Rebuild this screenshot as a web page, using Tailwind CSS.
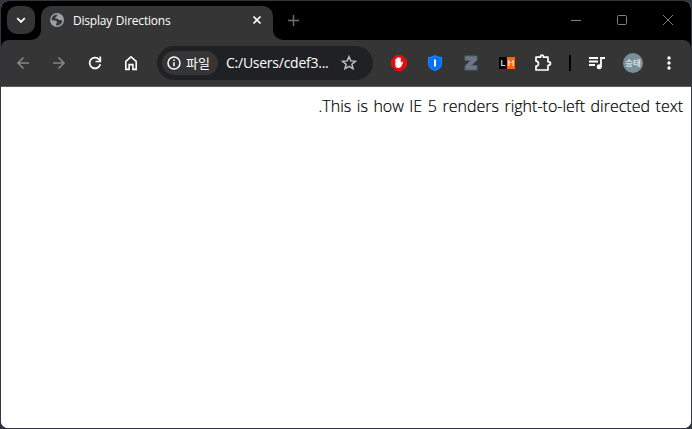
<!DOCTYPE html>
<html lang="ko">
<head>
<meta charset="utf-8">
<title>Display Directions</title>
<script src="https://cdn.jsdelivr.net/npm/@tailwindcss/browser@4"></script>
</head>
<body class="w-[692px] h-[429px] overflow-hidden bg-[#30353f] p-px font-['Open_Sans','Noto_Sans_CJK_KR',sans-serif]">
<div class="flex h-[427px] w-[690px] flex-col overflow-hidden rounded-[7px] bg-white">
  <!-- Tab strip -->
  <header class="flex h-[39px] shrink-0 bg-black">
    <button class="mt-[5px] ml-[6px] flex size-7 items-center justify-center rounded-[10px] bg-[#353535]">
      <svg width="10" height="7" viewBox="0 0 10 7" fill="none" stroke="#fff" stroke-width="1.800"><path d="M1.200 1.200L5 5l3.800-3.800"/></svg>
    </button>
    <svg class="mt-[29px] ml-[-4px] shrink-0" width="10" height="10"><path d="M10 0v10H0A10 10 0 0 0 10 0" fill="#353535"/></svg>
    <div class="mt-[5px] flex h-[34px] w-[232px] shrink-0 items-center rounded-t-[10px] bg-[#353535] pb-[6px] pl-[9px]">
      <svg width="14" height="14" viewBox="0 0 14 14"><circle cx="7" cy="7" r="7" fill="#9aa0a6"/><path d="M7.300 1.500C8 2.400 6.300 2.700 6.400 3.600c.1.9-1.400.7-1.500 1.500-.1.700 2.600.3 3.200 1.100.5.8 1.300 1 2.200.9.7-.1 1.100.5 2.100.3A5.500 5.500 0 0 1 6.200 12.400V10.700c0-.5.9-.7.8-1.500-.1-.8-.9-1.500-1.800-1.600L1.500 7.300A5.500 5.500 0 0 1 7.300 1.500" fill="#353535"/><path d="M8 2.200c1 .1 1.600.7 1.200 1.300-.3.600-1.300.6-1.200 1.300.1.700 1.200.7 1.700 1.200.5.5 1.600.3 2.900.3L11 3 8.500 1z" fill="#9aa0a6"/></svg>
      <span class="ml-[9px] mt-[2px] w-[170px] text-[12px] leading-[18px] tracking-[-0.22px] [word-spacing:1px] whitespace-nowrap text-white">Display Directions</span>
      <svg class="ml-[9px]" width="10" height="10" viewBox="0 0 10 10" stroke="#fff" stroke-width="1.700"><path d="M1.500 1.500l7 7m0-7l-7 7"/></svg>
    </div>
    <svg class="mt-[29px] shrink-0" width="10" height="10"><path d="M0 0v10h10A10 10 0 0 1 0 0" fill="#353535"/></svg>
    <svg class="mt-[14px] ml-[5px] shrink-0" width="11" height="11" viewBox="0 0 11 11" stroke="#707070" stroke-width="1.400"><path d="M5.500 0v11M0 5.500h11"/></svg>
    <div class="ml-auto flex h-[38px] items-center">
      <div class="flex w-[46px] justify-center"><svg width="10" height="10" stroke="#808080"><path d="M0 5.500h10"/></svg></div>
      <div class="flex w-[46px] justify-center"><svg width="10" height="10" fill="none" stroke="#808080"><rect x=".5" y=".5" width="9" height="9" rx="1"/></svg></div>
      <div class="flex w-[46px] justify-center"><svg width="10" height="10" stroke="#808080"><path d="M0 0l10 10M10 0L0 10"/></svg></div>
    </div>
  </header>
  <!-- Toolbar -->
  <div class="shrink-0 bg-black">
  <nav class="flex h-[47px] items-center rounded-t-[8px] border-b border-[#5c5c5c] bg-[#353535] pl-1 text-white">
    <div class="flex w-9 justify-center"><svg width="14" height="14" viewBox="0 0 14 14" fill="none" stroke="#858585" stroke-width="1.600"><path d="M13 7H2m5.500-5.500L2 7l5.500 5.500"/></svg></div>
    <div class="flex w-9 justify-center"><svg width="14" height="14" viewBox="0 0 14 14" fill="none" stroke="#858585" stroke-width="1.600"><path d="M1 7h11M6.500 1.500L12 7l-5.500 5.500"/></svg></div>
    <div class="flex w-9 justify-center"><svg width="14" height="14" viewBox="0 0 14 14" fill="none" stroke="#fff" stroke-width="1.700"><path d="M12.300 8.300A5.400 5.400 0 1 1 11 3.300l1.200 1.500"/><path d="M12.300 .5v5H7.500"/></svg></div>
    <div class="flex w-9 justify-center"><svg width="14" height="16" viewBox="0 0 14 16" fill="none" stroke="#fff" stroke-width="1.600"><path d="M1.800 6.300L7 1.900l5.200 4.400v8.100H8.900V9.600H5.100v4.800H1.800z"/></svg></div>
    <div class="mx-2 flex h-[34px] w-[216px] items-center rounded-full bg-[#202124] pl-[5px]">
      <div class="flex h-6 w-14 items-center rounded-full bg-[#353535] pl-[5px]">
        <svg width="14" height="14" viewBox="0 0 14 14" fill="none" stroke="#fff" stroke-width="1.500"><circle cx="7" cy="7" r="6"/><path d="M7 6.200v4M7 3.500v1.500"/></svg>
        <span class="mb-px ml-[5px] font-['Noto_Sans_CJK_KR',sans-serif] text-[13px] leading-[20px]">파일</span>
      </div>
      <span class="ml-2 w-[104px] text-[14px] leading-5 tracking-[-0.250px] whitespace-nowrap">C:/Users/cdef3...</span>
      <svg class="ml-[11px]" width="16" height="16" viewBox="0 0 16 16" fill="none" stroke="#c0c0c0" stroke-width="1.500"><path d="M8 1.700l1.800 4.200 4.600.4-3.500 3 1.100 4.500L8 11.400l-4 2.400 1.100-4.500-3.500-3 4.600-.4z"/></svg>
    </div>
    <div class="flex w-9 justify-center"><svg width="16" height="16" viewBox="0 0 16 16"><path d="M5 0h6l5 5v6l-5 5H5l-5-5V5z" fill="#e90b0b"/><path d="M4.300 7.800V4.300q.6-.9 1.300 0V3q.6-.9 1.400 0v-.5q.7-.9 1.400 0V3q.7-.8 1.400 0v5.300l1-1.500q.8-.7 1.400.1l-1.700 4.200Q9.500 13 7.500 13q-3.200 0-3.200-3.300z" fill="#fff"/></svg></div>
    <div class="flex w-9 justify-center"><svg width="14" height="16" viewBox="0 0 14 16"><path d="M7 0q3 2 7 2v7q0 4.500-7 7-7-2.500-7-7V2q4 0 7-2" fill="#1687ff"/><path d="M7 1.500q2.500 1.500 6 1.700V9q0 3.500-6 6-6-2.500-6-6V3.200q3.500-.2 6-1.700" fill="#086ffa"/><path d="M6 4.500h2v7H6z" fill="#fff"/></svg></div>
    <div class="flex w-9 justify-center"><svg width="14" height="16" viewBox="0 0 14 16"><path d="M1 1h12v4L7.500 10.500H13V15H1v-4l5.500-5.500H1z" fill="#6b7885" stroke="#56616d"/></svg></div>
    <div class="flex w-9 justify-center"><div class="flex h-3 w-4 text-center font-['Liberation_Sans',sans-serif] text-[9px] leading-3"><span class="w-2 bg-black">L</span><span class="w-2 bg-[#ff6600]">H</span></div></div>
    <div class="flex w-9 justify-center"><svg width="18" height="18" viewBox="0 0 18 18" fill="none" stroke="#fff" stroke-width="1.700" stroke-linejoin="round"><path d="M2 3.200h4.500q0-2 1.500-2t1.500 2H14v4.500q2.500 0 2.500 1.800T14 11.300V16H2v-3.800q2.500-.3 2.500-2.500T2 7.200z"/></svg></div>
    <div class="flex w-[18px] justify-center"><span class="h-4 w-[2px] bg-black"></span></div>
    <div class="flex w-9 justify-center"><svg width="16" height="14" viewBox="0 0 16 14" fill="none" stroke="#fff" stroke-width="1.800"><path d="M0 2h9M0 5.500h9M0 9h6M12 11V2h4"/><circle cx="10.200" cy="10.800" r="2.500" fill="#fff" stroke="none"/></svg></div>
    <div class="flex w-9 justify-center"><span class="flex size-5 items-center justify-center rounded-full bg-[#78909c] pb-px font-['Noto_Sans_CJK_KR',sans-serif] text-[8.500px] leading-none whitespace-nowrap">승태</span></div>
    <div class="flex w-9 justify-center"><svg width="4" height="14" viewBox="0 0 4 14" fill="#fff"><circle cx="2" cy="2" r="1.700"/><circle cx="2" cy="7" r="1.700"/><circle cx="2" cy="12" r="1.700"/></svg></div>
  </nav>
  </div>
  <main dir="rtl" class="flex-1 bg-white px-2 pt-[8px] font-['Open_Sans','Noto_Sans_CJK_KR',sans-serif] text-[16px] leading-[23px] font-light tracking-normal [word-spacing:1.400px] [-webkit-text-stroke:0.2px_#000] text-black">This is how IE 5 renders right-to-left directed text.</main>
</div>
</body>
</html>
